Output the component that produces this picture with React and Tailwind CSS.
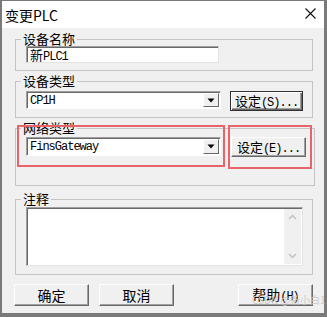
const cjk = { fontFamily: '"Noto Sans CJK SC", sans-serif' };
const mono = { fontFamily: '"Liberation Mono", "Noto Sans CJK SC", monospace' };

function Group({ label, className = '', children }) {
  return (
    <fieldset className={`ml-[13px] mr-[11px] border border-[#c4c4c4] pl-[5px] pr-[8px] ${className}`}>
      <legend className="px-[2px] text-[13px] leading-[14px] text-black" style={cjk}>
        {label}
      </legend>
      {children}
    </fieldset>
  );
}

// latin part of a label in the narrow dialog font
function Latin({ children }) {
  return (
    <span className="text-[12px] tracking-[-1px]" style={mono}>
      {children}
    </span>
  );
}

function Btn({ children, className = '', strong }) {
  return (
    <div
      className={`flex items-center justify-center bg-[#f0f0f0] text-[13px] text-black ${
        strong
          ? 'border border-[#303030] shadow-[inset_1px_1px_0_#fff,inset_-1px_-1px_0_#696969,inset_-2px_-2px_0_#a0a0a0]'
          : 'border border-t-white border-l-white border-b-[#696969] border-r-[#696969] shadow-[inset_-1px_-1px_0_#a0a0a0]'
      } ${className}`}
      style={cjk}
    >
      <span>{children}</span>
    </div>
  );
}

function Combo({ value, className = '' }) {
  return (
    <div className={`flex items-stretch bg-white border border-t-[#a0a0a0] border-l-[#a0a0a0] border-b-white border-r-white shadow-[inset_1px_1px_0_#696969] ${className}`}>
      <div className="flex flex-1 items-center pl-[3px] pt-[1px] text-[12px] leading-[14px] tracking-[-1px] text-black" style={mono}>
        {value}
      </div>
      <div className="my-[1px] mr-[1px] flex w-[16px] items-center justify-center bg-[#f0f0f0] border border-t-white border-l-white border-b-[#696969] border-r-[#696969]">
        <svg width="8" height="5" viewBox="0 0 8 5">
          <path d="M0.5 0.5h7L4 4.5z" fill="#000" />
        </svg>
      </div>
    </div>
  );
}

export default function App() {
  return (
    <div className="relative h-[317px] w-[327px] overflow-hidden bg-[#7a7a7a] pb-[4px] pl-[2px] pr-[3px] pt-[1px]">
      <div className="flex h-full flex-col bg-[#f0f0f0]">
        {/* title bar */}
        <div className="flex h-[27px] items-center justify-between bg-white pl-[3px] pr-[8px]">
          <span className="text-[14px] leading-[16px] text-black" style={cjk}>
            变更PLC
          </span>
          <svg width="11" height="11" viewBox="0 0 11 11" className="mb-[2px]">
            <path d="M0.5 0.5l10 10M10.5 0.5l-10 10" stroke="#111" strokeWidth="1.1" />
          </svg>
        </div>

        <Group label="设备名称" className="mt-[4px] pb-[7px]">
          <div className="ml-[5px] h-[17px] w-[193px] bg-white border border-t-[#a0a0a0] border-l-[#a0a0a0] border-b-[#e3e3e3] border-r-[#e3e3e3] shadow-[inset_1px_1px_0_#696969] pl-[3px] text-[12px] leading-[15px] tracking-[-1px] text-black" style={mono}>
            <span className="text-[13px] tracking-normal" style={cjk}>新</span>PLC1
          </div>
        </Group>

        <Group label="设备类型" className="mt-[3px] pb-[6px]">
          <div className="ml-[5px] mt-[3px] flex items-start gap-[9px]">
            <Combo value="CP1H" className="h-[18px] w-[195px]" />
            <Btn strong className="h-[20px] w-[73px]">设定<Latin>(S)...</Latin></Btn>
          </div>
        </Group>

        <Group label="网络类型" className="relative mt-[3px] pb-[28px]">
          <div className="ml-[5px] mt-[2px] flex items-start gap-[10px]">
            <Combo value="FinsGateway" className="h-[19px] w-[195px]" />
            <Btn className="h-[20px] w-[75px]">设定<Latin>(E)...</Latin></Btn>
          </div>
          <div className="pointer-events-none absolute left-[1px] top-[-10px] h-[42px] w-[208px] border-2 border-[#e8646a]" />
          <div className="pointer-events-none absolute left-[212px] top-[-10px] h-[44px] w-[84px] border-2 border-[#e8646a]" />
        </Group>

        <Group label="注释" className="mt-[6px] pb-[8px]">
          <div className="ml-[5px] mt-[1px] flex h-[59px] w-[277px] bg-white border border-t-[#a0a0a0] border-l-[#a0a0a0] border-b-[#e3e3e3] border-r-[#e3e3e3] shadow-[inset_1px_1px_0_#696969]">
            <div className="flex-1" />
            <div className="mb-[1px] mr-[1px] mt-[1px] flex w-[17px] flex-col items-center justify-between bg-[#f0f0f0] py-[5px]">
              <svg width="9" height="6" viewBox="0 0 9 6">
                <path d="M1 5l3.5-3.5L8 5" fill="none" stroke="#c2c2c2" strokeWidth="1.5" />
              </svg>
              <svg width="9" height="6" viewBox="0 0 9 6">
                <path d="M1 1l3.5 3.5L8 1" fill="none" stroke="#c2c2c2" strokeWidth="1.5" />
              </svg>
            </div>
          </div>
        </Group>

        <div className="ml-[12px] mr-[11px] mt-[9px] flex items-center">
          <Btn className="h-[22px] w-[75px] text-[14px]">确定</Btn>
          <Btn className="ml-[10px] h-[22px] w-[75px] text-[14px]">取消</Btn>
          <Btn className="ml-auto h-[22px] w-[75px] text-[14px]">帮助<Latin>(H)</Latin></Btn>
        </div>
      </div>

      <span
        className="absolute left-[252px] top-[294px] whitespace-nowrap text-[10px] leading-[12px] text-[#c8c8c8] opacity-90"
        style={cjk}
      >
        CSDN @新小白1
      </span>
    </div>
  );
}
